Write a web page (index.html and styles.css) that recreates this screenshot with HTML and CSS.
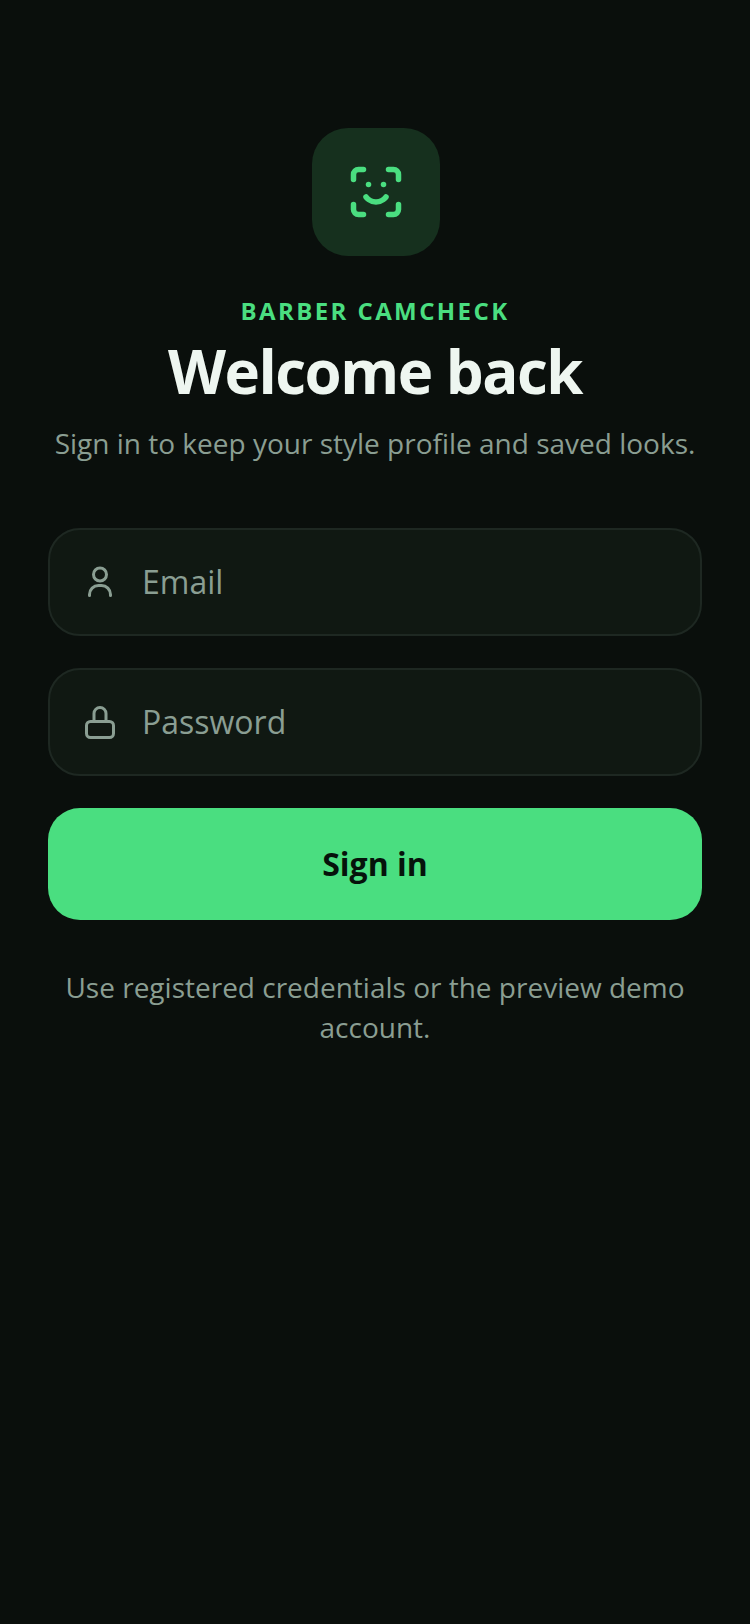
FILE: index.html
```html
<!DOCTYPE html>
<html lang="en">
<head>
    <meta charset="UTF-8">
    <meta name="viewport" content="width=device-width, initial-scale=1.0">
    <title>Sign in</title>
    <link rel="stylesheet" href="styles.css">
</head>
<body>
    <div class="login">
        <div class="logo">
            <svg width="60" height="60" viewBox="0 0 24 24" fill="none" stroke="currentColor" stroke-width="2.2" stroke-linecap="round" stroke-linejoin="round">
                <path d="M3 7V5a2 2 0 0 1 2-2h2"/>
                <path d="M17 3h2a2 2 0 0 1 2 2v2"/>
                <path d="M21 17v2a2 2 0 0 1-2 2h-2"/>
                <path d="M7 21H5a2 2 0 0 1-2-2v-2"/>
                <path d="M8 14s1.5 2 4 2 4-2 4-2"/>
                <path d="M9 9h.01"/>
                <path d="M15 9h.01"/>
            </svg>
        </div>

        <div class="brand">BARBER CAMCHECK</div>
        <h1>Welcome back</h1>
        <p class="subtitle">Sign in to keep your style profile and saved looks.</p>

        <form class="login-form">
            <div class="field">
                <svg class="field-icon" width="36" height="36" viewBox="0 0 36 36" fill="none" stroke="currentColor" stroke-width="3" stroke-linecap="round" stroke-linejoin="round">
                    <circle cx="18" cy="11.5" r="6.5"/>
                    <path d="M7.5 32.5v-1a9 9 0 0 1 9-9h3a9 9 0 0 1 9 9v1"/>
                </svg>
                <span class="placeholder">Email</span>
            </div>

            <div class="field">
                <svg class="field-icon" width="36" height="36" viewBox="0 0 36 36" fill="none" stroke="currentColor" stroke-width="3" stroke-linecap="round" stroke-linejoin="round">
                    <rect x="4.5" y="18.5" width="27" height="16" rx="4"/>
                    <path d="M12 18v-7.5a6 6 0 0 1 12 0V18"/>
                </svg>
                <span class="placeholder">Password</span>
            </div>

            <button type="button">Sign in</button>
        </form>

        <p class="hint">Use registered credentials or the preview demo account.</p>
    </div>
</body>
</html>
```

FILE: styles.css
```css
:root {
    --bg-color: #0a0f0c;
    --field-color: #101812;
    --border-color: #1e2822;
    --logo-color: #16301e;
    --green: #4ade80;
    --title-color: #eef6f0;
    --muted-color: #8a9e92;
}

* {
    margin: 0;
    padding: 0;
    box-sizing: border-box;
}

body {
    font-family: 'Open Sans', sans-serif;
    background-color: var(--bg-color);
    color: var(--title-color);
    min-height: 1624px;
}

.login {
    display: flex;
    flex-direction: column;
    align-items: center;
    padding: 128px 48px 0;
}

.logo {
    width: 128px;
    height: 128px;
    margin-left: 2px;
    border-radius: 36px;
    background-color: var(--logo-color);
    color: var(--green);
    display: flex;
    align-items: center;
    justify-content: center;
    margin-bottom: 32px;
}

.brand {
    color: var(--green);
    font-size: 24px;
    line-height: 32px;
    font-weight: 700;
    letter-spacing: 2.4px;
    margin-top: 7px;
}

h1 {
    font-size: 60px;
    line-height: 80px;
    font-weight: 700;
    letter-spacing: -1.5px;
    margin-top: 4px;
}

.subtitle {
    color: var(--muted-color);
    font-size: 28px;
    line-height: 40px;
    margin-top: 12px;
}

.login-form {
    width: 100%;
    display: flex;
    flex-direction: column;
    gap: 32px;
    margin-top: 65px;
}

.field {
    height: 108px;
    display: flex;
    align-items: center;
    gap: 24px;
    padding-left: 32px;
    padding-bottom: 2px;
    background-color: var(--field-color);
    border: 2px solid var(--border-color);
    border-radius: 32px;
    color: var(--muted-color);
}

.placeholder {
    font-size: 32px;
}

button {
    height: 112px;
    padding-bottom: 2px;
    background-color: var(--green);
    color: #06130b;
    border: none;
    border-radius: 32px;
    font-family: inherit;
    font-size: 32px;
    font-weight: 700;
}

.hint {
    color: var(--muted-color);
    font-size: 28px;
    line-height: 40px;
    text-align: center;
    margin-top: 47px;
}
```
